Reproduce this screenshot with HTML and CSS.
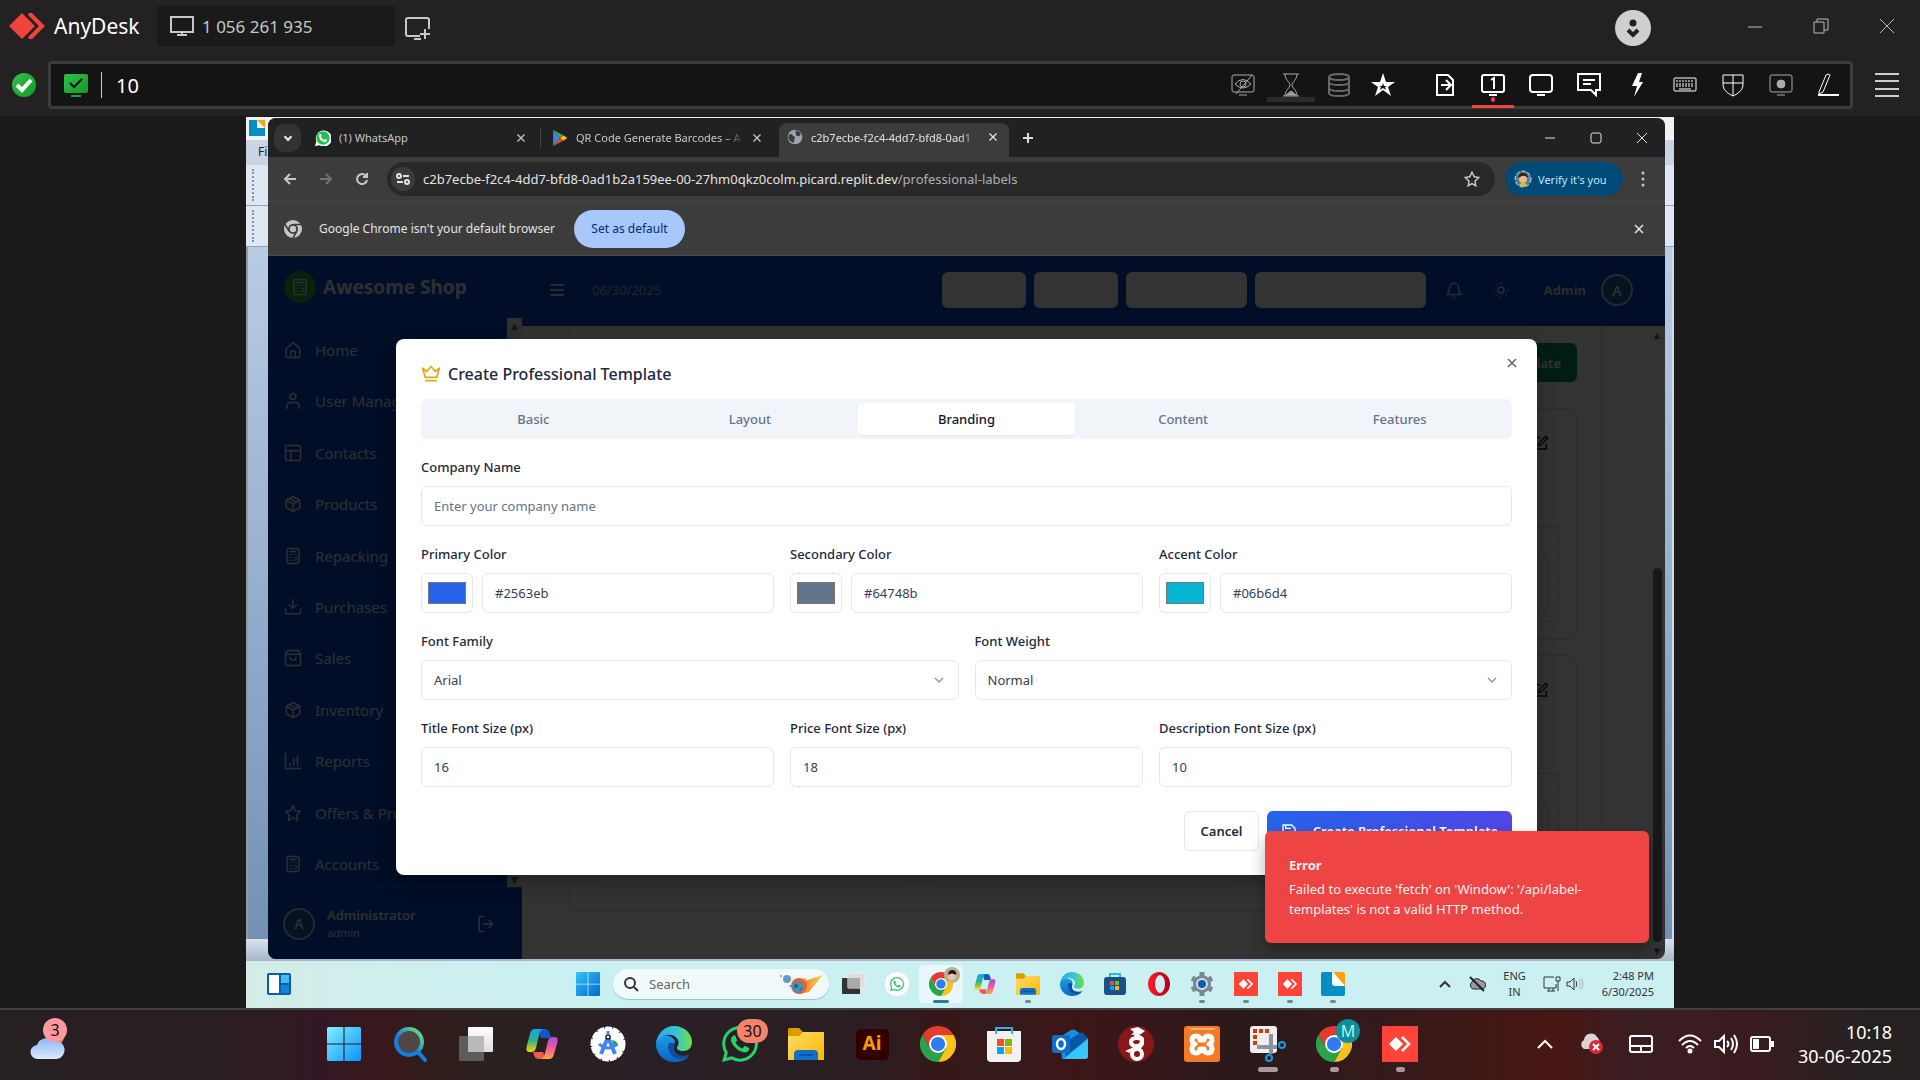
FILE: index.html
```html
<!DOCTYPE html>
<html lang="en">
<head>
<meta charset="utf-8">
<title>AnyDesk</title>
<link rel="stylesheet" href="styles.css">
</head>
<body>
<svg class="defs" aria-hidden="true">
  <defs>
    <linearGradient id="g-win" x1="0" y1="0" x2="1" y2="1"><stop offset="0" stop-color="#7df0ff"/><stop offset="1" stop-color="#0a93ff"/></linearGradient>
    <linearGradient id="g-win2" x1="0" y1="0" x2="1" y2="1"><stop offset="0" stop-color="#35c3f5"/><stop offset="1" stop-color="#0068cf"/></linearGradient>
    <linearGradient id="g-edge1" x1="0" y1="0" x2="1" y2="0"><stop offset="0" stop-color="#2aa8ea"/><stop offset=".55" stop-color="#35c4d8"/><stop offset="1" stop-color="#6fe03c"/></linearGradient>
    <linearGradient id="g-edge2" x1="0" y1="0" x2="0" y2="1"><stop offset="0" stop-color="#1a9fe8"/><stop offset="1" stop-color="#0a63c4"/></linearGradient>
    <linearGradient id="g-fold" x1="0" y1="0" x2="1" y2="1"><stop offset="0" stop-color="#ffdc6b"/><stop offset="1" stop-color="#fbb800"/></linearGradient>
    <linearGradient id="g-cop1" x1="0" y1="0" x2="0" y2="1"><stop offset="0" stop-color="#18a5f2"/><stop offset=".5" stop-color="#2bb38a"/><stop offset="1" stop-color="#ffd400"/></linearGradient>
    <linearGradient id="g-cop2" x1="0" y1="0" x2="0" y2="1"><stop offset="0" stop-color="#a74fe0"/><stop offset=".5" stop-color="#ef5a95"/><stop offset="1" stop-color="#ffa64a"/></linearGradient>
    <linearGradient id="g-cloud" x1="0" y1="0" x2="0" y2="1"><stop offset="0" stop-color="#8fb6f5"/><stop offset="1" stop-color="#dbe9ff"/></linearGradient>
    <linearGradient id="g-lens" x1="0" y1="1" x2="1" y2="0"><stop offset=".4" stop-color="#0f7fe0"/><stop offset="1" stop-color="#6fe86f"/></linearGradient>
    <linearGradient id="g-tv" x1="0" y1="0" x2="0" y2="1"><stop offset="0" stop-color="#fff"/><stop offset="1" stop-color="#dcdcdc"/></linearGradient>
    <linearGradient id="g-op" x1="0" y1="0" x2="1" y2="0"><stop offset="0" stop-color="#ff1b2d"/><stop offset="1" stop-color="#b3001b"/></linearGradient>
    <linearGradient id="g-green" x1="0" y1="0" x2="1" y2="1"><stop offset="0" stop-color="#2fc04a"/><stop offset="1" stop-color="#149a2a"/></linearGradient>
    <linearGradient id="g-fire" x1="0" y1="0" x2="1" y2="0"><stop offset="0" stop-color="#f25a1e"/><stop offset="1" stop-color="#ffd75a"/></linearGradient>
  </defs>
  <symbol id="i-win" viewBox="0 0 32 32"><path d="M0 1.500Q0 0 1.500 0H15.500V15.500H0zM16.500 0H30.500Q32 0 32 1.500V15.500H16.500zM0 16.500H15.500V32H1.500Q0 32 0 30.500zM16.500 16.500H32V30.500Q32 32 30.500 32H16.500z"/></symbol>
  <symbol id="i-chrome" viewBox="0 0 48 48"><path fill="#e33b2e" d="M24 12h20.800A24 24 0 0 0 3.200 12l10.400 18z"/><path fill="#fcc21b" d="M34.400 30 24 48A24 24 0 0 0 44.800 12H24z"/><path fill="#2ba24c" d="M13.600 30 3.200 12A24 24 0 0 0 24 48l10.400-18z"/><circle cx="24" cy="24" r="12" fill="#fff"/><circle cx="24" cy="24" r="9.500" fill="#2f7cee"/></symbol>
  <symbol id="i-edge" viewBox="0 0 36 36"><path fill="url(#g-edge2)" d="M0 18C1 10 8 8 13 10c6 2 7 6 5 8-4 4-3 12 5 14 4 1 8 0 10-2-3 4-9 6-15 6C8 36 0 28 0 18z"/><path fill="url(#g-edge1)" d="M0 18C1 7 9 0 18 0c11 0 18 8 18 16 0 6-4 9-9 9-4 0-7-2-6-4 2-2 2-5 1-7-4-8-18-7-22 4z"/><path fill="#0d4fa0" d="M12 20c0 8 6 13 13 13 4 0 7-2 9-5-3 2-7 2-11 1-5-2-6-7-4-11-3-2-7-2-7 2z"/></symbol>
  <symbol id="i-explorer" viewBox="0 0 36 36"><path fill="#dc9c00" d="M0 3.500Q0 2 1.500 2H11l4 4v6H0z"/><path fill="url(#g-fold)" d="M0 10H11l4-4H36V34H0z"/><path fill="#0f6fc9" d="M6 34V28q0-4 4-4H26q4 0 4 4v6z"/><path stroke="#0b4f96" stroke-width="1.500" d="M11 29H25"/></symbol>
  <symbol id="i-copilot" viewBox="0 0 36 36"><path fill="#1653c8" d="M14 3H21Q25 3 26 8l1 4H17z"/><path fill="#f05a4a" d="M9 26H19l3 7H15Q11 33 10 29z"/><path fill="url(#g-cop1)" d="M11 3H19Q16 4 15 9L12 22Q11 26 7 26H5Q1 26 3 19L6 8Q7 3 11 3z"/><path fill="url(#g-cop2)" d="M25 33H17Q20 32 21 27L24 15Q25 11 29 11H31Q35 11 33 18L30 28Q29 33 25 33z"/></symbol>
  <symbol id="i-wa" viewBox="0 0 24 24"><path d="M17.472 14.382c-.297-.149-1.758-.867-2.030-.967-.273-.099-.471-.148-.67.150-.197.297-.767.966-.94 1.164-.173.199-.347.223-.644.075-.297-.150-1.255-.463-2.390-1.475-.883-.788-1.480-1.761-1.653-2.059-.173-.297-.018-.458.130-.606.134-.133.298-.347.446-.520.149-.174.198-.298.298-.497.099-.198.050-.371-.025-.520-.075-.149-.669-1.612-.916-2.207-.242-.579-.487-.5-.669-.510-.173-.008-.371-.010-.570-.010-.198 0-.520.074-.792.372-.272.297-1.040 1.016-1.040 2.479 0 1.462 1.065 2.875 1.213 3.074.149.198 2.096 3.200 5.077 4.487.709.306 1.262.489 1.694.625.712.227 1.360.195 1.871.118.571-.085 1.758-.719 2.006-1.413.248-.694.248-1.289.173-1.413-.074-.124-.272-.198-.570-.347m-5.421 7.403h-.004a9.870 9.870 0 0 1-5.031-1.378l-.361-.214-3.741.982.998-3.648-.235-.374a9.860 9.860 0 0 1-1.510-5.260c.001-5.450 4.436-9.884 9.888-9.884 2.640 0 5.122 1.030 6.988 2.898a9.825 9.825 0 0 1 2.893 6.994c-.003 5.450-4.437 9.884-9.885 9.884m8.413-18.297A11.815 11.815 0 0 0 12.050 0C5.495 0 .160 5.335.157 11.892c0 2.096.547 4.142 1.588 5.945L.057 24l6.305-1.654a11.882 11.882 0 0 0 5.683 1.448h.005c6.554 0 11.890-5.335 11.893-11.893a11.821 11.821 0 0 0-3.480-8.413z"/></symbol>
  <symbol id="i-any" viewBox="0 0 36 36"><path fill="#ff4338" d="M0 0H36V36H0z"/><path fill="#fff" d="M7 18l7-7 7 7-7 7z"/><path fill="none" stroke="#fff" stroke-width="2.500" d="M20 11l7 7-7 7"/></symbol>
  <symbol id="i-x" viewBox="0 0 16 16"><path fill="none" stroke="currentColor" stroke-width="1.500" d="M4 4l8 8M12 4L4 12"/></symbol>
  <symbol id="i-calc" viewBox="0 0 24 24"><path d="M6 2h12a2 2 0 0 1 2 2v16a2 2 0 0 1-2 2H6a2 2 0 0 1-2-2V4a2 2 0 0 1 2-2zM8 6h8M16 14v4M16 10h.010M12 10h.010M8 10h.010M12 14h.010M8 14h.010M12 18h.010M8 18h.010"/></symbol>
  <symbol id="i-box" viewBox="0 0 24 24"><path d="M21 7l-9-5-9 5v10l9 5 9-5zM3 7l9 5 9-5M12 12v10M7.500 4.500l9 5"/></symbol>
  <symbol id="i-edit" viewBox="0 0 24 24"><path d="M11 4H4v16a1 1 0 0 0 1 1h15v-8M19 2l3 3L12 15l-4 1 1-4z"/></symbol>
  <symbol id="i-down" viewBox="0 0 24 24"><path d="M6 9l6 6 6-6"/></symbol>
</svg>

<header class="anydesk">
  <div class="titlebar">
    <svg class="brand-mark" viewBox="0 0 36 26"><path fill="#ef443b" d="M0 13L13 0l13 13-13 13zM20 0h3l13 13-13 13h-3l-1-2 11-11L19 2z"/></svg>
    <span class="brand">AnyDesk</span>
    <button class="session" type="button">
      <svg width="24" height="22" viewBox="0 0 24 22" class="ln"><path d="M1 2h22v15H1zM12 17v3M7 20h10"/></svg>
      <span>1 056 261 935</span>
    </button>
    <button class="plain add" type="button" aria-label="New session"><svg width="26" height="24" viewBox="0 0 26 24" class="ln"><path d="M15 19H3q-2 0-2-2V3q0-2 2-2h19q2 0 2 2v9M20 12v10M15 17h10M9 22h7"/></svg></button>
    <div class="title-right">
      <svg class="account" viewBox="0 0 36 36"><circle cx="18" cy="18" r="18" fill="#cfcfcf"/><circle cx="18" cy="13" r="3.500" fill="#222"/><path fill="none" stroke="#222" stroke-width="4" d="M13 20l5 5 5-5"/></svg>
      <button class="plain wc" type="button" aria-label="Minimise"><svg width="16" height="16" viewBox="0 0 16 16" class="ln"><path d="M1 9h14"/></svg></button>
      <button class="plain wc" type="button" aria-label="Restore"><svg width="16" height="16" viewBox="0 0 16 16" class="ln"><path d="M1 4h10v11H1zM4 4V1h11v11h-4"/></svg></button>
      <button class="plain wc" type="button" aria-label="Close"><svg width="16" height="16" viewBox="0 0 16 16" class="ln"><path d="M1 1l14 14M15 1L1 15"/></svg></button>
    </div>
  </div>
  <div class="toolbar">
    <svg class="ok" viewBox="0 0 24 24"><circle cx="12" cy="12" r="12" fill="url(#g-green)"/><path fill="none" stroke="#fff" stroke-width="4" d="M5 12l5 5 9-10"/></svg>
    <div class="field">
      <svg class="ok" viewBox="0 0 24 24"><rect y="1" width="24" height="19" rx="2" fill="url(#g-green)"/><path fill="none" stroke="#111" stroke-width="2" d="M6 10l4 4 8-8"/><path stroke="#18a02e" stroke-width="2" d="M7 23h10"/></svg>
      <input class="address" type="text" value="10" aria-label="Remote address">
      <div class="tools">
        <button class="tool dim" type="button" aria-label="Privacy"><svg viewBox="0 0 24 24"><rect x="1" y="2" width="22" height="17" rx="2"/><path d="M4 11q8-9 16 0-8 8-16 0M21 2L5 21M8 22h8"/><circle cx="12" cy="11" r="3"/></svg></button>
        <button class="tool dim shade" type="button" aria-label="Waiting"><svg viewBox="0 0 24 24"><path d="M4 1h16M4 23h16M6 1c0 6 5 8 5 11s-5 5-5 11M18 1c0 6-5 8-5 11s5 5 5 11"/><path fill="#999" d="M7 22l5-4 5 4z"/></svg></button>
        <button class="tool dark" type="button" aria-label="Storage"><svg viewBox="0 0 24 24"><ellipse cx="12" cy="4" rx="10" ry="3"/><path d="M2 4v16c0 4 20 4 20 0V4M2 9c0 4 20 4 20 0M2 15c0 4 20 4 20 0"/></svg></button>
        <button class="tool star" type="button" aria-label="Favourites"><svg viewBox="0 0 24 24"><path fill="#fff" stroke="none" fill-rule="evenodd" d="M12 0l3 9h9l-7 5 3 9-8-6-8 6 3-9-7-5h9zM12 10l-1 3H8l2 1-1 3 3-2 3 2-1-3 2-1h-3z"/></svg></button>
        <button class="tool" type="button" aria-label="File transfer"><svg viewBox="0 0 24 24"><path d="M4 2h11l5 5v15H4zM8 12h9M13 7l5 5-5 5"/></svg></button>
        <button class="tool current" type="button" aria-label="Monitor 1"><svg viewBox="0 0 24 24"><rect x="1" y="2" width="22" height="17" rx="2"/><path d="M8 22h8M10 7l3-2v11"/></svg></button>
        <button class="tool" type="button" aria-label="Display"><svg viewBox="0 0 24 24"><rect x="1" y="2" width="22" height="17" rx="3"/><path d="M8 22h8"/></svg></button>
        <button class="tool" type="button" aria-label="Chat"><svg viewBox="0 0 24 24"><path d="M1 1h22v16h-4v5l-5-5H1zM6 7h12M6 11h8"/></svg></button>
        <button class="tool" type="button" aria-label="Actions"><svg viewBox="0 0 24 24"><path fill="#fff" stroke="none" d="M13 0h4l-3 9h4L9 24l3-11H7z"/></svg></button>
        <button class="tool fine" type="button" aria-label="Keyboard"><svg viewBox="0 0 24 24"><rect x="1" y="5" width="22" height="13" rx="1"/><path stroke-dasharray="2 1" d="M3 8h18M3 11h18M3 13h18"/><path d="M6 16h12"/></svg></button>
        <button class="tool fine" type="button" aria-label="Permissions"><svg viewBox="0 0 24 24"><path d="M2 2h20v9c0 6-4 9-10 12C6 20 2 17 2 11zM12 2v21M2 10h20"/></svg></button>
        <button class="tool dim" type="button" aria-label="Record"><svg viewBox="0 0 24 24"><rect x="1" y="2" width="22" height="17" rx="2"/><path d="M8 22h8"/><circle cx="12" cy="11" r="4" fill="#aaa"/></svg></button>
        <button class="tool fine" type="button" aria-label="Whiteboard"><svg viewBox="0 0 24 24"><path stroke-width="2" d="M2 22h21"/><path d="M3 19L10 2q2-2 4 0L7 19l-4 2z"/></svg></button>
      </div>
    </div>
    <button class="plain menu" type="button" aria-label="Menu"><svg width="24" height="26" viewBox="0 0 24 26" class="ln"><path d="M0 2h24M0 9h24M0 17h24M0 24h24"/></svg></button>
  </div>
</header>

<main class="stage">
  <section class="remote">
    <div class="desktop">
      <div class="labelapp">
        <div class="la-title"><svg width="16" height="16" viewBox="0 0 36 36"><path fill="#0590c4" d="M0 0H18V18H36V36H0z"/><path fill="#ffa010" d="M18 0H36V18z"/></svg></div>
        <div class="la-menu">File</div>
        <div class="la-tools"><i></i></div>
        <div class="la-tools"><i></i></div>
        <div class="la-canvas"></div>
        <div class="la-status"></div>
      </div>

      <div class="chrome">
        <div class="tabs">
          <button class="tab-search" type="button" aria-label="Search tabs"><svg width="14" height="14" viewBox="0 0 24 24" class="st3"><use href="#i-down"/></svg></button>
          <div class="tab"><svg class="fav" viewBox="0 0 24 24"><path fill="#fff" d="M0 24l2-7A12 12 0 1 1 7 23z"/><circle cx="12" cy="12" r="10" fill="#25c050"/><path fill="#fff" d="M7 6l2 0 1 3-1 2q2 3 4 4l2-2 3 2q-1 4-4 3Q7 16 6 10 5 7 7 6z"/></svg><span class="tab-text">(1) WhatsApp</span><svg class="tx"><use href="#i-x"/></svg></div>
          <div class="tab second"><svg class="fav" viewBox="0 0 24 24"><path fill="#30a852" d="M2 0l10 12L2 24z"/><path fill="#3b82f0" d="M2 1v21l9-10z"/><path fill="#fbbc04" d="M17 8l6 4-6 4-5-4z"/><path fill="#34a853" d="M2 0l15 8-5 4z"/><path fill="#ea4335" d="M2 24l15-8-5-4z"/></svg><span class="tab-text fade">QR Code Generate Barcodes – A</span><svg class="tx"><use href="#i-x"/></svg></div>
          <div class="tab active"><svg class="fav" viewBox="0 0 24 24"><circle cx="12" cy="12" r="11" fill="#9aa5b1"/><path fill="#3c3c3c" d="M4 7q4 0 5 3l3 2-1 4-1 5Q3 19 2 12zM13 2q6 1 8 6l-3 3-4-1-1-4z"/></svg><span class="tab-text fade">c2b7ecbe-f2c4-4dd7-bfd8-0ad1</span><svg class="tx"><use href="#i-x"/></svg></div>
          <button class="plain newtab" type="button" aria-label="New tab"><svg width="14" height="14" viewBox="0 0 14 14" class="ln"><path d="M7 2v10M2 7h10"/></svg></button>
          <div class="cw">
            <svg width="12" height="12" viewBox="0 0 12 12" class="ln"><path d="M1 6h10"/></svg>
            <svg width="12" height="12" viewBox="0 0 12 12" class="ln"><rect x="1" y="1" width="10" height="10" rx="2"/></svg>
            <svg width="12" height="12" viewBox="0 0 12 12" class="ln"><path d="M1 1l10 10M11 1L1 11"/></svg>
          </div>
        </div>
        <div class="navbar">
          <button class="plain nb" type="button" aria-label="Back"><svg viewBox="0 0 16 16"><path d="M14 8H3M8 3L3 8l5 5"/></svg></button>
          <button class="plain nb off" type="button" aria-label="Forward"><svg viewBox="0 0 16 16"><path d="M2 8h11M8 3l5 5-5 5"/></svg></button>
          <button class="plain nb" type="button" aria-label="Reload"><svg viewBox="0 0 16 16"><path d="M13 9A5 5 0 1 1 11 4l2 2M13 2v4H9"/></svg></button>
          <div class="omni">
            <span class="site"><svg width="14" height="14" viewBox="0 0 14 14" class="ln"><circle cx="3" cy="4" r="2"/><path d="M7 4h6M1 10h6"/><circle cx="11" cy="10" r="2"/></svg></span>
            <span class="url">c2b7ecbe-f2c4-4dd7-bfd8-0ad1b2a159ee-00-27hm0qkz0colm.picard.replit.dev<em>/professional-labels</em></span>
            <svg class="bookmark" viewBox="0 0 24 24"><path d="M12 3l3 6 6 1-5 5 1 6-5-3-5 3 1-6-5-5 6-1z"/></svg>
          </div>
          <button class="verify" type="button"><svg width="18" height="18" viewBox="0 0 18 18"><circle cx="9" cy="9" r="8" fill="#5d7f8f" stroke="#b8e0f5" stroke-dasharray="4 2"/><circle cx="9" cy="9" r="4" fill="#e8b98e"/><path fill="#2b211d" d="M4 8q1-6 6-5 4 1 4 5-3-3-6-2z"/><path fill="#d9bf3a" d="M5 15q4-5 8 0-4 3-8 0z"/></svg>Verify it's you</button>
          <svg class="dots" viewBox="0 0 4 16"><circle cx="2" cy="2" r="1.500"/><circle cx="2" cy="8" r="1.500"/><circle cx="2" cy="14" r="1.500"/></svg>
        </div>
        <div class="infobar">
          <svg width="18" height="18" viewBox="0 0 48 48"><circle cx="24" cy="24" r="24" fill="#c7c7c7"/><path fill="none" stroke="#3c3c3c" stroke-width="4" d="M24 12h21M13.600 30L3 12M34.400 30L24 48"/><circle cx="24" cy="24" r="11" fill="#c7c7c7" stroke="#3c3c3c" stroke-width="5"/></svg>
          <span>Google Chrome isn't your default browser</span>
          <button class="setdef" type="button">Set as default</button>
          <svg class="ix"><use href="#i-x"/></svg>
        </div>

        <div class="page">
          <aside class="side">
            <div class="shop"><span class="shop-mark"><svg width="18" height="18" viewBox="0 0 24 24" class="st2"><use href="#i-calc"/></svg></span>Awesome Shop</div>
            <div class="side-mid">
              <nav class="nav">
                <a href="#home"><svg viewBox="0 0 24 24"><path d="M3 10l9-8 9 8v10a2 2 0 0 1-2 2H5a2 2 0 0 1-2-2zM9 22v-7q0-2 3-2t3 2v7"/></svg>Home</a>
                <a href="#users"><svg viewBox="0 0 24 24"><circle cx="12" cy="6" r="4"/><path d="M4 22v-3q0-5 5-5h6q5 0 5 5v3"/></svg>User Management</a>
                <a href="#contacts"><svg viewBox="0 0 24 24"><rect x="2" y="2" width="20" height="20" rx="2"/><path d="M2 9h20M9 9v13"/></svg>Contacts</a>
                <a href="#products"><svg><use href="#i-box"/></svg>Products</a>
                <a href="#repacking"><svg><use href="#i-calc"/></svg>Repacking</a>
                <a href="#purchases"><svg viewBox="0 0 24 24"><path d="M2 15v4a2 2 0 0 0 2 2h16a2 2 0 0 0 2-2v-4M7 9l5 5 5-5M12 14V2"/></svg>Purchases</a>
                <a href="#sales"><svg viewBox="0 0 24 24"><path d="M5 2h14l3 4v14a2 2 0 0 1-2 2H4a2 2 0 0 1-2-2V6zM2 7h20M8 11q0 4 4 4t4-4"/></svg>Sales</a>
                <a href="#inventory"><svg><use href="#i-box"/></svg>Inventory</a>
                <a href="#reports"><svg viewBox="0 0 24 24"><path d="M2 2v20h20M8 18v-3M13 18V9M18 18V5"/></svg>Reports</a>
                <a href="#offers"><svg viewBox="0 0 24 24"><path d="M12 2l3 7 7 1-5 5 1 7-6-4-6 4 1-7-5-5 7-1z"/></svg>Offers &amp; Promotions</a>
                <a href="#accounts"><svg><use href="#i-calc"/></svg>Accounts</a>
              </nav>
              <div class="side-scroll"><span>▲</span><span>▼</span></div>
            </div>
            <div class="me"><span class="avatar">A</span><div class="who"><b>Administrator</b><small>admin</small></div><svg width="18" height="18" viewBox="0 0 24 24" class="st2"><path d="M9 2H5a2 2 0 0 0-2 2v16a2 2 0 0 0 2 2h4M16 7l5 5-5 5M21 12H9"/></svg></div>
          </aside>
          <div class="body">
            <div class="head">
              <svg width="16" height="16" viewBox="0 0 16 16" class="st2"><path d="M2 3h12M2 8h12M2 13h12"/></svg>
              <span class="date">06/30/2025</span>
              <div class="quick"><button class="q1" type="button" aria-label="POS"></button><button class="q1" type="button" aria-label="Sales"></button><button class="q2" type="button" aria-label="Inventory"></button><button class="q3" type="button" aria-label="Dashboard"></button></div>
              <svg class="hi" viewBox="0 0 24 24"><path d="M6 9a6 6 0 0 1 12 0c0 7 3 8 3 9H3c0-1 3-2 3-9M10 22h4"/></svg>
              <svg class="hi sun" viewBox="0 0 24 24"><circle cx="12" cy="12" r="4"/><path d="M12 2v2M12 20v2M5 5l1 1M18 18l1 1M2 12h2M20 12h2M6 18l-1 1M19 5l-1 1"/></svg>
              <b class="admin">Admin</b><span class="avatar">A</span>
            </div>
            <div class="content">
              <div class="panel">
                <button class="newt" type="button">Create Professional Template</button>
                <div class="cards">
                  <article class="card"><svg><use href="#i-edit"/></svg><div class="dash"><div></div></div></article>
                  <article class="card"><svg><use href="#i-edit"/></svg><div class="dash"><div></div></div></article>
                  <article class="card"><svg><use href="#i-edit"/></svg><div class="dash"><div></div></div></article>
                  <article class="card"><svg><use href="#i-edit"/></svg><div class="dash"><div></div></div></article>
                  <article class="card"><svg><use href="#i-edit"/></svg><div class="dash"><div></div></div></article>
                  <article class="card"><svg><use href="#i-edit"/></svg><div class="dash"><div></div></div></article>
                </div>
              </div>
              <div class="scroll"><span>▲</span><i></i><span>▼</span></div>
            </div>
          </div>

          <div class="overlay">
            <form class="dialog">
              <h1><svg width="20" height="20" viewBox="0 0 24 24"><path d="M2 5l5 4 5-6 5 6 5-4-3 11H5zM5 20h14"/></svg>Create Professional Template</h1>
              <button class="plain dx" type="button" aria-label="Close"><svg width="16" height="16"><use href="#i-x"/></svg></button>
              <div class="dtabs">
                <button type="button">Basic</button><button type="button">Layout</button><button type="button" class="on">Branding</button><button type="button">Content</button><button type="button">Features</button>
              </div>
              <div class="row"><div class="f"><label for="company">Company Name</label><input id="company" type="text" placeholder="Enter your company name"></div></div>
              <div class="row">
                <div class="f"><label for="pc">Primary Color</label><div class="pair"><input type="color" value="#2563eb" aria-label="Primary swatch"><input id="pc" type="text" value="#2563eb"></div></div>
                <div class="f"><label for="sc">Secondary Color</label><div class="pair"><input type="color" value="#64748b" aria-label="Secondary swatch"><input id="sc" type="text" value="#64748b"></div></div>
                <div class="f"><label for="ac">Accent Color</label><div class="pair"><input type="color" value="#06b6d4" aria-label="Accent swatch"><input id="ac" type="text" value="#06b6d4"></div></div>
              </div>
              <div class="row">
                <div class="f"><label for="ff">Font Family</label><div class="sel"><select id="ff"><option>Arial</option></select><svg><use href="#i-down"/></svg></div></div>
                <div class="f"><label for="fw">Font Weight</label><div class="sel"><select id="fw"><option>Normal</option></select><svg><use href="#i-down"/></svg></div></div>
              </div>
              <div class="row">
                <div class="f"><label for="ts">Title Font Size (px)</label><input id="ts" type="text" value="16"></div>
                <div class="f"><label for="ps">Price Font Size (px)</label><input id="ps" type="text" value="18"></div>
                <div class="f"><label for="ds">Description Font Size (px)</label><input id="ds" type="text" value="10"></div>
              </div>
              <div class="actions">
                <button class="cancel" type="button">Cancel</button>
                <button class="create" type="button"><svg width="16" height="16" viewBox="0 0 24 24"><path d="M3 3h13l5 5v13H3zM7 3v5h8M7 21v-8h10v8"/></svg>Create Professional Template</button>
              </div>
            </form>
          </div>
          <div class="toast" role="alert"><b>Error</b><p>Failed to execute 'fetch' on 'Window': '/api/label-templates' is not a valid HTTP method.</p></div>
        </div>
      </div>
    </div>

    <footer class="rbar">
      <div class="rleft"><svg width="24" height="22" viewBox="0 0 24 22"><rect width="24" height="22" rx="2" fill="#0b5cad"/><path fill="#fff" d="M2 2h10v18H2z"/><path fill="#3fc1f0" d="M14 2h8v8h-8z"/><path fill="#1683d8" d="M14 12h8v8h-8z"/></svg></div>
      <button class="plain rstart" type="button" aria-label="Start"><svg width="24" height="24" fill="url(#g-win2)"><use href="#i-win"/></svg></button>
      <label class="rsearch"><svg width="16" height="16" viewBox="0 0 16 16"><circle cx="7" cy="7" r="5"/><path d="M11 11l4 4"/></svg><input type="text" placeholder="Search" aria-label="Search"><svg class="comet" viewBox="0 0 44 22"><path fill="url(#g-fire)" d="M14 8L28 5l-3 3L44 2 34 14l-4 5-10 2z"/><circle cx="20" cy="13" r="8" fill="#e8622a"/><circle cx="19" cy="14" r="6" fill="#4b8fb5"/><circle cx="17" cy="13" r="2" fill="#2b5f80"/><circle cx="22" cy="16" r="1" fill="#2b5f80"/><circle cx="8" cy="6" r="4" fill="#5aa0c4"/><circle cx="2" cy="3" r="1" fill="#5aa0c4"/><circle cx="11" cy="13" r="1" fill="#5aa0c4"/></svg></label>
      <div class="rapps">
        <button class="plain" type="button" aria-label="Task view"><svg viewBox="0 0 24 24"><path fill="#333" d="M0 6h18v16H0z"/><path fill="#ddd" stroke="#eee" d="M6 1h17v15H6z"/><path fill="#aaa" d="M6 6h12v10H6z"/></svg></button>
        <button class="plain" type="button" aria-label="WhatsApp"><svg viewBox="0 0 24 24"><circle cx="12" cy="12" r="12" fill="#fff"/><use href="#i-wa" x="5" y="5" width="14" height="14" fill="#25c060"/></svg></button>
        <button class="plain sel-app" type="button" aria-label="Chrome"><svg viewBox="0 0 24 24"><use href="#i-chrome"/></svg><svg class="face" viewBox="0 0 16 16"><circle cx="8" cy="8" r="8" fill="#b9ad98"/><circle cx="8" cy="9" r="4" fill="#e9c3a4"/><path fill="#1c1716" d="M4 8q0-5 5-5 4 1 3 5-4-3-8 0z"/></svg></button>
        <button class="plain" type="button" aria-label="Copilot"><svg><use href="#i-copilot"/></svg></button>
        <button class="plain run" type="button" aria-label="File Explorer"><svg><use href="#i-explorer"/></svg></button>
        <button class="plain" type="button" aria-label="Edge"><svg><use href="#i-edge"/></svg></button>
        <button class="plain" type="button" aria-label="Store"><svg viewBox="0 0 24 24"><path fill="none" stroke="#2fb4e8" stroke-width="2" d="M7 6V2h10v4"/><rect y="5" x="1" width="22" height="18" rx="3" fill="#17508a"/><path fill="#f25022" d="M7 9h4v4H7z"/><path fill="#7fba00" d="M12 9h4v4h-4z"/><path fill="#00a4ef" d="M7 14h4v4H7z"/><path fill="#ffb900" d="M12 14h4v4h-4z"/></svg></button>
        <button class="plain" type="button" aria-label="Opera"><svg viewBox="0 0 24 24"><path fill="url(#g-op)" fill-rule="evenodd" d="M12 0a11 12 0 1 0 0 24A11 12 0 1 0 12 0zm1 3a5 9 0 1 1 0 18 5 9 0 1 1 0-18z"/></svg></button>
        <button class="plain run" type="button" aria-label="Settings"><svg viewBox="0 0 24 24"><circle cx="12" cy="12" r="9" fill="#7b8793"/><path stroke="#7b8793" stroke-width="5" d="M12 0v24M2 6l20 12M22 6L2 18"/><circle cx="12" cy="12" r="5" fill="#0b5cad" stroke="#d7dde2" stroke-width="2"/></svg></button>
        <button class="plain run" type="button" aria-label="AnyDesk"><svg><use href="#i-any"/></svg></button>
        <button class="plain run" type="button" aria-label="AnyDesk session"><svg><use href="#i-any"/></svg></button>
        <button class="plain run" type="button" aria-label="Label designer"><svg viewBox="0 0 24 24"><rect width="24" height="24" rx="2" fill="#0590c4"/><path fill="#fff" d="M11 0h13v14H14q-3 0-3-3z"/><path fill="#ffa010" d="M12 0h10q2 0 2 2v12z"/></svg></button>
      </div>
      <div class="rtray">
        <svg width="12" height="8" viewBox="0 0 12 8" class="ln"><path d="M1 7l5-5 5 5"/></svg>
        <svg width="18" height="16" viewBox="0 0 18 16"><path fill="#999" stroke="#222" d="M5 13a4 4 0 0 1-1-7 5 5 0 0 1 9-1 4 4 0 0 1 1 8z"/><path stroke="#222" stroke-width="2" d="M2 1l14 14"/></svg>
        <span class="lang">ENG<br>IN</span>
        <svg width="18" height="16" viewBox="0 0 18 16" class="ln thin"><path d="M11 1H1v11h12V8M4 15h8M6 12v3M10 12v3M13 1h4v4h-4zM15 5v10"/></svg>
        <svg width="18" height="14" viewBox="0 0 18 14" class="ln thin"><path d="M1 5h3l4-4v12L4 9H1zM10 4q2 3 0 6"/><path opacity=".3" d="M13 2q3 5 0 10M15 1q4 6 0 12"/></svg>
        <time>2:48 PM<br>6/30/2025</time>
      </div>
    </footer>
  </section>
</main>

<footer class="taskbar">
  <div class="weather"><svg width="36" height="36" viewBox="0 0 36 36"><circle cx="26" cy="11" r="8" fill="#f57c1f"/><path fill="url(#g-cloud)" d="M8 33a7 7 0 0 1-1-14 10 9 0 0 1 17-4 9 9 0 0 1 3 18z"/></svg><span class="badge wb">3</span></div>
  <div class="apps">
    <button class="plain" type="button" aria-label="Start"><svg viewBox="0 0 36 36" fill="url(#g-win)"><use href="#i-win" x="1" y="1" width="34" height="34"/></svg></button>
    <button class="plain" type="button" aria-label="Search"><svg viewBox="0 0 36 36"><circle cx="17" cy="16" r="13" fill="#514546" stroke="url(#g-lens)" stroke-width="4"/><path stroke="#0f7fe0" stroke-width="4" stroke-linecap="round" d="M26 26l7 8"/></svg></button>
    <button class="plain" type="button" aria-label="Task view"><svg viewBox="0 0 36 36"><rect y="10" x="1" width="25" height="25" rx="1" fill="#5c5c5c"/><rect x="10" y="1" width="25" height="25" rx="1" fill="url(#g-tv)"/><path fill="#b9b9b9" d="M10 10h16v16H10z"/></svg></button>
    <button class="plain" type="button" aria-label="Copilot"><svg><use href="#i-copilot"/></svg></button>
    <button class="plain" type="button" aria-label="Android Studio"><svg viewBox="0 0 36 36"><circle cx="18" cy="18" r="16" fill="#fff" stroke="#fff" stroke-width="3" stroke-dasharray="7 1"/><path fill="#1ea446" d="M22 14q6 1 6 6l-4 1z"/><path fill="none" stroke="#4285f4" stroke-width="4" d="M18 11L11 28M18 11l7 17"/><path fill="none" stroke="#4285f4" stroke-width="3" d="M9 18q9 8 18 0"/><circle cx="18" cy="11" r="2" fill="#fff" stroke="#222" stroke-width="1.500"/><path stroke="#4285f4" stroke-width="3" d="M18 5v3"/></svg></button>
    <button class="plain" type="button" aria-label="Edge"><svg><use href="#i-edge"/></svg></button>
    <button class="plain" type="button" aria-label="WhatsApp"><svg fill="#25d366"><use href="#i-wa"/></svg><span class="badge ab">30</span></button>
    <button class="plain" type="button" aria-label="File Explorer"><svg><use href="#i-explorer"/></svg></button>
    <button class="plain" type="button" aria-label="Illustrator"><span class="ai">Ai</span></button>
    <button class="plain" type="button" aria-label="Chrome"><svg><use href="#i-chrome"/></svg></button>
    <button class="plain" type="button" aria-label="Store"><svg viewBox="0 0 36 36"><path fill="#f1f1f1" d="M1 5h34v27q0 4-4 4H5q-4 0-4-4z"/><path fill="none" stroke="#27b4ee" stroke-width="2" d="M10 8V2h16v6"/><path fill="#f25022" d="M11 13h7v7h-7z"/><path fill="#7fba00" d="M19 13h7v7h-7z"/><path fill="#00a4ef" d="M11 21h7v7h-7z"/><path fill="#ffb900" d="M19 21h7v7h-7z"/></svg></button>
    <button class="plain" type="button" aria-label="Outlook"><svg viewBox="0 0 36 36"><path fill="#1490df" d="M8 11L19 4q2-1 4 0l13 9v17q0 3-3 3H10z"/><path fill="#0a56a5" d="M10 18L30 6l6 6-22 18z"/><path fill="#35c8f5" d="M36 13v17q0 3-3 3H12z"/><rect y="9" width="18" height="18" rx="2" fill="#0f6cc8"/><ellipse cx="9" cy="18" rx="4" ry="5" fill="none" stroke="#fff" stroke-width="2.500"/></svg></button>
    <button class="plain" type="button" aria-label="WireGuard"><svg viewBox="0 0 36 36"><circle cx="18" cy="18" r="18" fill="#88171a"/><g fill="none" stroke="#fff" stroke-width="4"><circle cx="19" cy="28" r="5"/><path d="M13 24q8-1 11-6 1-6-5-6-6 0-6 4t6 4q6-1 5-7L17 8"/></g><path fill="#fff" d="M12 3l8-2 7 4-4 3-10 1 3-3zM7 25l7-3-2 5z"/></svg></button>
    <button class="plain" type="button" aria-label="XAMPP"><svg viewBox="0 0 36 36"><rect width="36" height="36" rx="3" fill="#f47a25"/><path fill="#ffb27a" d="M4 2h28l-3 2H7z"/><path fill="#f47a25" stroke="#fff" stroke-width="5" stroke-linejoin="round" d="M12 10q-4 0-4 4 0 3 3 4-3 1-3 5 0 4 4 4 4 0 4-4h4q0 4 4 4 4 0 4-4 0-4-3-5 3-1 3-4 0-4-4-4-4 0-4 4h-4q0-4-4-4z"/></svg></button>
    <button class="plain run wide" type="button" aria-label="Snipping Tool"><svg viewBox="0 0 36 36"><rect width="27" height="27" rx="3" fill="#eceef4"/><path fill="none" stroke="#d83b01" stroke-width="4" stroke-dasharray="4 2" d="M5 19V5h15"/><path fill="none" stroke="#8d949c" stroke-width="4" d="M7 21h20M21 8v20"/><g fill="none" stroke="#1996e6" stroke-width="2"><circle cx="32" cy="19" r="3"/><circle cx="19" cy="32" r="3"/></g></svg></button>
    <button class="plain run" type="button" aria-label="Chrome profile M"><svg><use href="#i-chrome"/></svg><span class="badge mb">M</span></button>
    <button class="plain run" type="button" aria-label="AnyDesk"><svg><use href="#i-any"/></svg></button>
  </div>
  <div class="tray">
    <svg width="16" height="10" viewBox="0 0 16 10"><path d="M1 9l7-7 7 7"/></svg>
    <svg width="24" height="22" viewBox="0 0 24 22"><path fill="#d9d3d3" stroke="none" d="M5 16a5 5 0 0 1 0-9 7 7 0 0 1 13-3q4 3 2 8l-5 4z"/><circle cx="17" cy="14" r="7" fill="#d92832" stroke="none"/><path d="M14 11l6 6M20 11l-6 6"/></svg>
    <svg width="24" height="18" viewBox="0 0 24 18"><rect x="1" y="1" width="22" height="16" rx="2"/><path d="M1 11h22M12 11v6"/></svg>
    <div class="sys">
      <svg width="24" height="20" viewBox="0 0 24 20"><path d="M1 7q11-11 22 0M4 11q8-8 16 0M8 14q4-4 8 0"/><circle cx="12" cy="17" r="1.500" fill="#fff"/></svg>
      <svg width="24" height="20" viewBox="0 0 24 20"><path d="M1 7h4l5-5v16l-5-5H1zM13 7q3 3 0 6M17 4q4 6 0 12M20 1q6 9 0 18"/></svg>
      <svg width="24" height="16" viewBox="0 0 24 16"><rect x="1" y="1" width="19" height="14" rx="2"/><path fill="#fff" stroke="none" d="M3 3h6v10H3zM21 5h3v6h-3z"/></svg>
    </div>
    <time>10:18<br>30-06-2025</time>
  </div>
</footer>
</body>
</html>
```
FILE: styles.css
```css
* { box-sizing: border-box; }
html, body { height: 100%; }
body {
  margin: 0;
  display: flex;
  flex-direction: column;
  background: #1a1a1a;
  color: #fff;
  font-family: "Noto Sans", "Open Sans", sans-serif;
  font-size: 13px;
  overflow: hidden;
}
button, input, select { font: inherit; color: inherit; }
button { border: 0; padding: 0; }
svg { flex: none; display: block; }
.defs { position: absolute; width: 0; height: 0; }
.plain { background: none; display: flex; align-items: center; justify-content: center; }
.ln { fill: none; stroke: currentColor; stroke-width: 2; }
.thin { stroke-width: 1; }
.st2 { fill: none; stroke: currentColor; stroke-width: 2; stroke-linecap: round; stroke-linejoin: round; }
.st3 { fill: none; stroke: currentColor; stroke-width: 4; }

/* AnyDesk client */
.anydesk { background: #242122; }
.titlebar { display: flex; align-items: center; height: 54px; padding: 0 25px 2px 9px; }
.brand-mark { width: 36px; height: 26px; }
.brand { font-size: 21px; margin-left: 9px; width: 103px; }
.session { display: flex; align-items: center; gap: 8px; width: 238px; height: 40px; padding-left: 13px; background: #1a1a1a; color: #c8c8c8; font-size: 17px; }
.add { margin-left: 10px; margin-top: 5px; color: #c8c8c8; }
.title-right { display: flex; align-items: center; margin-left: auto; color: #bbb; }
.account { width: 36px; height: 36px; margin: 4px 88px 0 0; }
.wc { width: 16px; margin-left: 50px; }
.wc:nth-of-type(1) { margin-left: 8px; }
.wc .ln { stroke-width: 1; }
.toolbar { display: flex; align-items: center; height: 62px; padding: 0 21px 0 12px; }
.ok { width: 24px; height: 24px; }
.field { flex: 1; display: flex; align-items: center; height: 48px; margin: 0 22px 0 12px; padding-left: 13px; background: #141414; border: 3px solid #3c3c3c; border-radius: 4px; }
.address { flex: 1; min-width: 0; height: 26px; margin-left: 13px; padding: 0 14px; background: none; border: 0; border-left: 1px solid #ccc; font-size: 20px; }
.tools { display: flex; align-self: stretch; }
.tool { position: relative; width: 48px; background: none; display: flex; align-items: center; justify-content: center; }
.tool svg { width: 24px; height: 24px; fill: none; stroke: #fff; stroke-width: 2; }
.tool.fine svg { stroke-width: 1; }
.tool.dim svg { stroke: #aaa; stroke-width: 1; }
.tool.dark svg { stroke: #6a6a6a; }
.tool.star { width: 40px; margin-right: 18px; }
.tool:last-child { width: 45px; }
.tool.shade::after { content: ""; position: absolute; left: 0; right: 0; bottom: 4px; height: 5px; background: #2b2b2b; }
.tool.current::before { content: ""; position: absolute; left: 22px; bottom: 4px; width: 4px; height: 5px; border-radius: 2px; background: #ef443b; }
.tool.current::after { content: ""; position: absolute; left: 3px; right: 3px; bottom: -2px; height: 3px; background: #ef443b; }
.menu { color: #ccc; }

/* Remote screen */
.stage { flex: 1; min-height: 0; padding: 1px 246px 0; display: flex; }
.remote { flex: 1; min-width: 0; display: flex; flex-direction: column; }
.desktop { position: relative; flex: 1; min-height: 0; display: flex; padding: 1px 9px 2px 22px; background: #b4c8e2; }
.labelapp { position: absolute; inset: 0; display: flex; flex-direction: column; color: #222; }
.la-title { height: 23px; padding: 3px; background: #f2f2f2; }
.la-menu { height: 25px; padding-left: 12px; font-size: 12px; line-height: 24px; background: #c9d5e5; }
.la-tools { height: 41px; padding: 4px 0 4px 6px; background: #dfe7f2; border-bottom: 1px solid #8ea3bf; }
.la-tools i { display: block; width: 24px; height: 32px; border-left: 2px dotted #7d93b3; }
.la-canvas { flex: 1; background: linear-gradient(#b9cce6, #7390b5); border-left: 2px solid #999; border-right: 2px solid #d5dce6; }
.la-status { height: 22px; background: linear-gradient(#dbe2ee, #a9b6c9); }
.chrome { position: relative; flex: 1; min-width: 0; display: flex; flex-direction: column; border-radius: 8px; overflow: hidden; background: #3c3c3c; color: #e3e3e3; }

.tabs { display: flex; align-items: center; height: 39px; padding-left: 6px; background: #1f2123; font-size: 11px; }
.tab-search { width: 27px; height: 28px; border-radius: 10px; background: #333; display: grid; place-items: center; }
.tab { display: flex; align-items: center; width: 239px; height: 20px; padding: 0 12px 0 14px; color: #c7c7c7; }
.tab.second { border-left: 1px solid #444; padding: 0 15px 0 11px; }
.fav { width: 16px; height: 16px; }
.tab-text { flex: 1; min-width: 0; margin: 0 6px 0 8px; white-space: nowrap; }
.fade { -webkit-mask-image: linear-gradient(90deg, #000 88%, transparent); mask-image: linear-gradient(90deg, #000 88%, transparent); }
.tx { width: 14px; height: 14px; }
.tab.active { align-self: flex-end; width: 230px; height: 34px; padding: 0 9px 6px 8px; background: #3c3c3c; border-radius: 8px 8px 0 0; color: #e3e3e3; }
.newtab { margin-left: 12px; color: #ddd; }
.cw { display: flex; gap: 34px; margin-left: auto; padding-right: 17px; }
.cw .ln { stroke-width: 1; }

.navbar { display: flex; align-items: center; height: 45px; padding: 0 20px 0 14px; border-bottom: 1px solid #474747; }
.nb { width: 16px; margin-right: 20px; }
.nb svg { width: 16px; height: 16px; fill: none; stroke: #c7c7c7; stroke-width: 2; }
.nb.off { opacity: .4; }
.omni { flex: 1; display: flex; align-items: center; height: 34px; padding: 0 14px 0 4px; margin: 0 10px 0 -3px; border-radius: 17px; background: #282828; }
.site { width: 24px; height: 24px; border-radius: 12px; background: #3c3c3c; display: grid; place-items: center; margin-right: 8px; }
.url { flex: 1; font-size: 13px; white-space: nowrap; }
.url em { font-style: normal; color: #b0b0b0; }
.bookmark { width: 18px; height: 18px; fill: none; stroke: #c7c7c7; stroke-width: 2; }
.verify { display: flex; align-items: center; gap: 6px; height: 34px; width: 118px; padding-left: 9px; border-radius: 17px; background: #004a77; color: #c2e7ff; font-size: 11px; white-space: nowrap; }
.dots { width: 4px; height: 16px; fill: #c7c7c7; margin-left: 18px; }
.infobar { display: flex; align-items: center; height: 54px; padding: 0 18px 0 16px; border-bottom: 1px solid #4a4a4a; font-size: 12px; }
.infobar span { width: 238px; margin: 0 17px; white-space: nowrap; }
.setdef { width: 111px; height: 38px; border-radius: 19px; background: #a8c7fa; color: #062e6f; }
.ix { width: 16px; height: 16px; margin-left: auto; }

/* Shop page */
.page { position: relative; flex: 1; min-height: 0; display: flex; background: #fff; color: #111827; }
.side { width: 254px; display: flex; flex-direction: column; background: #0a46c8; color: #e5e5e5; }
.shop { display: flex; align-items: center; gap: 7px; height: 62px; padding: 0 16px; font-size: 19px; font-weight: 700; }
.shop-mark { width: 32px; height: 32px; border-radius: 16px; background: #1fa53c; display: grid; place-items: center; }
.side-mid { flex: 1; min-height: 0; display: flex; }
.nav { flex: 1; min-width: 0; display: flex; flex-direction: column; justify-content: space-between; padding: 9px 0 0 16px; overflow: hidden; }
.nav a { display: flex; align-items: center; gap: 13px; height: 46px; color: #e5e5e5; text-decoration: none; font-size: 15px; white-space: nowrap; }
.nav svg { width: 18px; height: 18px; fill: none; stroke: #e5e5e5; stroke-width: 2; stroke-linecap: round; stroke-linejoin: round; }
.side-scroll, .scroll { display: flex; flex-direction: column; align-items: center; width: 15px; color: #666; font-size: 12px; line-height: 15px; }
.side-scroll { justify-content: space-between; background: #eee; }
.me { display: flex; align-items: center; height: 72px; padding: 0 27px 0 15px; border-top: 1px solid #2a5be0; }
.avatar { width: 32px; height: 32px; border: 2px solid #bcd; border-radius: 16px; background: #1c5a9f; color: #e5e5e5; display: grid; place-items: center; font-size: 14px; font-weight: 600; }
.who { flex: 1; display: flex; flex-direction: column; margin-left: 12px; font-size: 13px; line-height: 18px; }
.who b { font-weight: 600; }
.who small { font-size: 11px; }
.body { flex: 1; min-width: 0; display: flex; flex-direction: column; }
.head { display: flex; align-items: center; height: 70px; padding: 0 32px 2px 27px; background: #0a46c8; color: #d5d5d5; }
.date { flex: 1; margin-left: 27px; color: #b4bac6; }
.quick { display: flex; gap: 8px; margin-right: 19px; }
.quick button { height: 36px; border-radius: 6px; background: #fff; }
.q1 { width: 84px; } .q2 { width: 121px; } .q3 { width: 171px; }
.hi { width: 18px; height: 18px; margin-right: 29px; fill: none; stroke: #d5d5d5; stroke-width: 2; }
.sun { margin-right: 34px; }
.admin { margin-right: 15px; }
.content { flex: 1; min-height: 0; display: flex; justify-content: space-between; }
.panel { flex: 1; margin: 0 47px 48px; padding: 17px 24px 24px; border: 1px solid #d8dce3; border-top: 0; border-radius: 0 0 8px 8px; display: flex; flex-direction: column; }
.newt { align-self: flex-end; height: 39px; width: 244px; padding-right: 16px; text-align: right; border-radius: 6px; background: #009060; color: #fff; font-weight: 600; }
.cards { flex: 1; min-height: 0; display: grid; grid-template-columns: 1fr 1fr 1fr; grid-template-rows: 1fr 1fr; gap: 15px 17px; margin-top: 26px; }
.card { border: 1px solid #d8dce3; border-radius: 8px; padding: 26px 17px 17px; }
.card svg { width: 16px; height: 16px; margin: 0 10px 0 auto; fill: none; stroke: #111; stroke-width: 2; }
.dash { height: 96px; margin-top: 75px; padding: 29px 9px 9px; border: 1px dashed #aab6c5; border-radius: 4px; }
.dash div { height: 56px; border: 1px solid #d8dce3; border-radius: 4px; }
.scroll { width: 16px; font-size: 11px; line-height: 17px; }
.scroll i { flex: 1; width: 9px; margin-top: 225px; border-radius: 5px; background: #777; }

.overlay { position: absolute; inset: 0; display: grid; place-items: center; padding-bottom: 2px; background: rgba(0,0,0,.8); }
.dialog { position: relative; width: min(1141px, calc(100% - 32px)); padding: 24px 25px; border-radius: 8px; background: #fff; color: #1e293b; box-shadow: 0 8px 20px rgba(0,0,0,.3); }
.dialog h1 { display: flex; align-items: center; gap: 7px; height: 22px; margin: 0 0 14px; font-size: 16px; font-weight: 500; }
.dialog h1 svg { fill: none; stroke: #ddaa16; stroke-width: 2; stroke-linejoin: round; }
.dx { position: absolute; top: 16px; right: 17px; color: #5b6474; }
.dtabs { display: grid; grid-template-columns: repeat(5, 1fr); height: 40px; padding: 4px; border-radius: 6px; background: #f1f5f9; }
.dtabs button { background: none; border-radius: 4px; color: #64748b; font-weight: 500; }
.dtabs .on { background: #fff; color: #0f172a; box-shadow: 0 1px 2px rgba(0,0,0,.05); }
.row { display: flex; gap: 16px; margin-top: 19px; }
.f { flex: 1; min-width: 0; }
.f label { display: block; height: 20px; margin-bottom: 8px; line-height: 18px; font-weight: 500; }
.f input, .f select { display: block; width: 100%; height: 40px; padding: 0 12px; border: 1px solid #e2e8f0; border-radius: 6px; background: #fff; color: #334155; }
.f input::placeholder { color: #64748b; }
.f .pair { display: flex; gap: 9px; }
.pair input[type="color"] { flex: none; width: 52px; padding: 4px; }
.sel { position: relative; }
.f select { appearance: none; }
.sel svg { position: absolute; right: 12px; top: 12px; width: 16px; height: 16px; fill: none; stroke: #8b95a5; stroke-width: 2; }
.actions { display: flex; justify-content: flex-end; gap: 8px; margin-top: 24px; }
.actions button { height: 40px; border-radius: 6px; font-weight: 600; }
.cancel { width: 75px; border: 1px solid #e2e8f0; background: #fff; }
.create { display: flex; align-items: center; justify-content: center; gap: 16px; width: 245px; background: linear-gradient(90deg, #2563eb, #4f46e5); color: #fff; }
.create svg { fill: none; stroke: #fff; stroke-width: 2; }
.toast { position: absolute; right: 16px; bottom: 16px; width: 384px; height: 112px; padding: 24px 24px; border-radius: 6px; background: #ef4444; color: #fdf0f0; box-shadow: 0 8px 16px rgba(0,0,0,.3); line-height: 20px; }
.toast b { display: block; margin-bottom: 4px; }
.toast p { margin: 0; }

/* Taskbar of the remote machine */
.rbar { display: flex; align-items: center; height: 47px; padding: 0 20px 1px 0; background: linear-gradient(90deg, #d3ece7, #cbf0f2 20%); color: #333; }
.rleft { width: 320px; padding-left: 21px; }
.rstart { width: 44px; }
.rsearch { display: flex; align-items: center; width: 216px; height: 30px; margin: 0 3px; padding: 0 6px 0 10px; border-radius: 15px; background: #f0fafb; box-shadow: 0 1px 1px #9dbfc2; }
.rsearch > svg:first-child { fill: none; stroke: #333; stroke-width: 2; }
.rsearch input { flex: 1; min-width: 0; margin-left: 10px; padding: 0; border: 0; background: none; }
.rsearch input::placeholder { color: #666; }
.comet { width: 44px; height: 22px; }
.rapps { display: flex; width: 523px; }
.rapps button { position: relative; flex: 1; height: 38px; }
.rapps svg { width: 24px; height: 24px; }
.rapps .sel-app { background: #e6f8f9; border-radius: 4px; }
.rapps .face { position: absolute; right: 3px; top: 2px; width: 16px; height: 16px; }
.run::after, .sel-app::after { content: ""; position: absolute; bottom: 0; width: 6px; height: 3px; border-radius: 2px; background: #75898d; }
.sel-app::after { width: 16px; background: #2a7f8c; }
.rtray { display: flex; align-items: center; margin-left: auto; font-size: 11px; line-height: 16px; }
.rtray svg:nth-of-type(2) { margin: 0 17px 0 17px; }
.lang { text-align: center; }
.rtray svg:nth-of-type(3) { margin: 0 5px 0 17px; }
.rtray time { margin-left: 18px; text-align: right; }

/* Local taskbar */
.taskbar {
  display: flex; align-items: center; height: 72px; padding: 0 28px 2px 0; border-top: 2px solid #454040;
  background: linear-gradient(90deg, #252022, #291e22 11%, #331724 17%, #38181a 20%, #2a201d 25%, #291f26 33%, #2a1e22 45%, #371718 49%, #341a1a 52%, #3d1517 56%, #2a1a1b 65%, #35191a 72%, #471713 81%, #3a1d22 85%, #3a1b20 91%, #262121 97%);
}
.weather { position: relative; width: 311px; padding-left: 30px; }
.badge { position: absolute; display: grid; place-items: center; height: 24px; border-radius: 12px; color: #111; font-size: 16px; }
.wb { left: 43px; top: -8px; width: 24px; background: #ff98a0; }
.apps { display: flex; }
.apps button { position: relative; width: 66px; height: 56px; }
.apps svg { width: 36px; height: 36px; }
.ab { left: 30px; top: 3px; width: 31px; background: #f5826b; }
.mb { left: 35px; top: 3px; width: 24px; background: #0c8f98; color: #b8f0f0; }
.ai { width: 33px; height: 31px; border-radius: 5px; background: #330000; color: #ff9a00; font-size: 19px; font-weight: 700; line-height: 29px; }
.taskbar .run::after { width: 9px; height: 5px; border-radius: 3px; background: #a89a9a; }
.taskbar .wide::after { width: 20px; }
.tray { display: flex; align-items: center; margin-left: auto; font-size: 18px; line-height: 24px; }
.tray svg { fill: none; stroke: #fff; stroke-width: 2; }
.tray > svg { margin-right: 26px; }
.sys { display: flex; align-items: center; gap: 12px; margin: 0 24px 0 -1px; }
.tray time { text-align: right; }
```
